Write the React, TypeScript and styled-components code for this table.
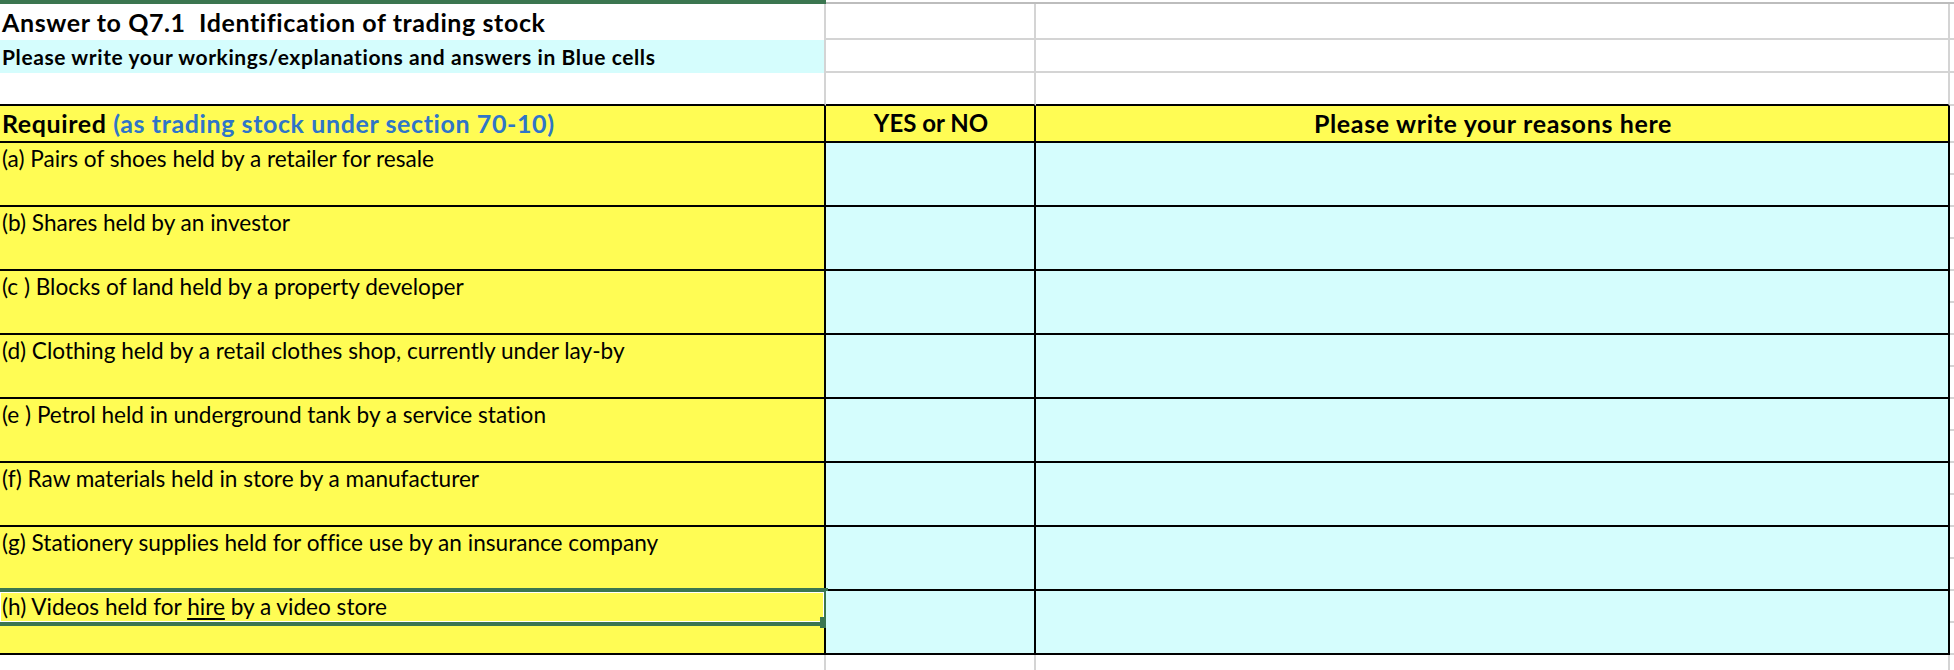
import React from 'react';
import styled, { createGlobalStyle } from 'styled-components';

const C = {
  yellow: '#FFFC54',
  blue: '#D5FDFD',
  black: '#000000',
  grid: '#D4D4D4',
  gridDark: '#BDBDBD',
  green: '#3B7650',
  accent: '#2F75C8',
};

const Global = createGlobalStyle`
  html, body { margin: 0; padding: 0; background: #fff; }
  body {
    font-family: Lato, "Liberation Sans", sans-serif;
    color: #000;
    font-variant-ligatures: none;
    font-feature-settings: "liga" 0, "clig" 0;
  }
`;

const Sheet = styled.div`
  width: 1954px;
  height: 670px;
  overflow: hidden;
  display: flex;
  flex-direction: column;
`;

const Row = styled.div<{ $h: number }>`
  display: grid;
  grid-template-columns: 826px 210px 914px 1fr;
  height: ${p => p.$h}px;
  flex: none;
`;

const Cell = styled.div<{ $fill?: string; $rb?: string; $bb?: string; $center?: boolean; $ticks?: boolean }>`
  position: relative;
  box-sizing: border-box;
  min-width: 0;
  background: ${p => p.$fill ?? 'transparent'};
  ${p => (p.$ticks ? `background-image: repeating-linear-gradient(to bottom, transparent 0 30px, ${C.grid} 30px 32px);` : '')}
  border-right: ${p => (p.$rb ? `2px solid ${p.$rb}` : 'none')};
  border-bottom: ${p => (p.$bb ? `2px solid ${p.$bb}` : 'none')};
  text-align: ${p => (p.$center ? 'center' : 'left')};
  padding-left: 2px;
  white-space: nowrap;
`;

const Title = styled.div`
  font-weight: 700;
  font-size: 25px;
  letter-spacing: 0.6px;
  line-height: 1.2;
  padding-top: 3px;
`;

const Subtitle = styled.div`
  font-weight: 700;
  font-size: 21px;
  letter-spacing: 0.6px;
  line-height: 1.2;
  padding-top: 4px;
`;

const HeadText = styled.div<{ $size?: number; $ls?: number }>`
  font-weight: 700;
  font-size: ${p => p.$size ?? 25}px;
  letter-spacing: ${p => p.$ls ?? 0.6}px;
  line-height: 1.2;
  padding-top: ${p => Math.round(26.5 - 0.987 * (p.$size ?? 25))}px;
`;

const Accent = styled.span`
  color: ${C.accent};
`;

const ItemText = styled.div`
  font-size: 22.6px;
  line-height: 1.2;
  padding-top: 2px;
`;

const Under = styled.span`
  text-decoration: underline;
  text-decoration-thickness: 2px;
  text-underline-offset: 3px;
`;

const Selection = styled.div`
  position: absolute;
  left: -4px;
  top: -3px;
  width: 832px;
  height: 38px;
  box-sizing: border-box;
  border: 4px solid ${C.green};
  box-shadow: inset 0 0 0 1px #fff;
  pointer-events: none;
`;

const Handle = styled.div`
  position: absolute;
  left: 820px;
  top: 26px;
  width: 10px;
  height: 11px;
  background: ${C.green};
`;

const items: React.ReactNode[] = [
  '(a) Pairs of shoes held by a retailer for resale',
  '(b) Shares held by an investor',
  '(c ) Blocks of land held by a property developer',
  '(d) Clothing held by a retail clothes shop, currently under lay-by',
  '(e ) Petrol held in underground tank by a service station',
  '(f) Raw materials held in store by a manufacturer',
  '(g) Stationery supplies held for office use by an insurance company',
];

export default function App() {
  return (
    <>
      <Global />
      <Sheet>
        <Row $h={4}>
          <Cell $fill={C.green} />
          <Cell $bb={C.gridDark} />
          <Cell $bb={C.gridDark} />
          <Cell $bb={C.gridDark} />
        </Row>
        <Row $h={36}>
          <Cell $rb={C.grid}>
            <Title>Answer to Q7.1&nbsp; Identification of trading stock</Title>
          </Cell>
          <Cell $rb={C.grid} $bb={C.grid} />
          <Cell $rb={C.grid} $bb={C.grid} />
          <Cell $bb={C.grid} />
        </Row>
        <Row $h={33}>
          <Cell $fill={C.blue} $rb={C.grid}>
            <Subtitle>Please write your workings/explanations and answers in Blue cells</Subtitle>
          </Cell>
          <Cell $rb={C.grid} $bb={C.grid} />
          <Cell $rb={C.grid} $bb={C.grid} />
          <Cell $bb={C.grid} />
        </Row>
        <Row $h={33}>
          <Cell $rb={C.grid} $bb={C.black} />
          <Cell $rb={C.grid} $bb={C.black} />
          <Cell $rb={C.grid} $bb={C.black} />
          <Cell $bb={C.grid} />
        </Row>
        <Row $h={37}>
          <Cell $fill={C.yellow} $rb={C.black} $bb={C.black}>
            <HeadText>
              Required <Accent>(as trading stock under section 70-10)</Accent>
            </HeadText>
          </Cell>
          <Cell $fill={C.yellow} $rb={C.black} $bb={C.black} $center>
            <HeadText $size={24} $ls={0}>YES or NO</HeadText>
          </Cell>
          <Cell $fill={C.yellow} $rb={C.black} $bb={C.black} $center>
            <HeadText $ls={0.65}>Please write your reasons here</HeadText>
          </Cell>
          <Cell $bb={C.grid} />
        </Row>
        {items.map((t, i) => (
          <Row $h={64} key={i}>
            <Cell $fill={C.yellow} $rb={C.black} $bb={C.black}>
              <ItemText>{t}</ItemText>
            </Cell>
            <Cell $fill={C.blue} $rb={C.black} $bb={C.black} />
            <Cell $fill={C.blue} $rb={C.black} $bb={C.black} />
            <Cell $ticks />
          </Row>
        ))}
        <Row $h={64}>
          <Cell $fill={C.yellow} $rb={C.black} $bb={C.black}>
            <ItemText>
              (h) Videos held for <Under>hire</Under> by a video store
            </ItemText>
            <Selection />
            <Handle />
          </Cell>
          <Cell $fill={C.blue} $rb={C.black} $bb={C.black} />
          <Cell $fill={C.blue} $rb={C.black} $bb={C.black} />
          <Cell $ticks />
        </Row>
        <Row $h={15}>
          <Cell $rb={C.grid} />
          <Cell $rb={C.grid} />
          <Cell $rb={C.grid} />
          <Cell />
        </Row>
      </Sheet>
    </>
  );
}
